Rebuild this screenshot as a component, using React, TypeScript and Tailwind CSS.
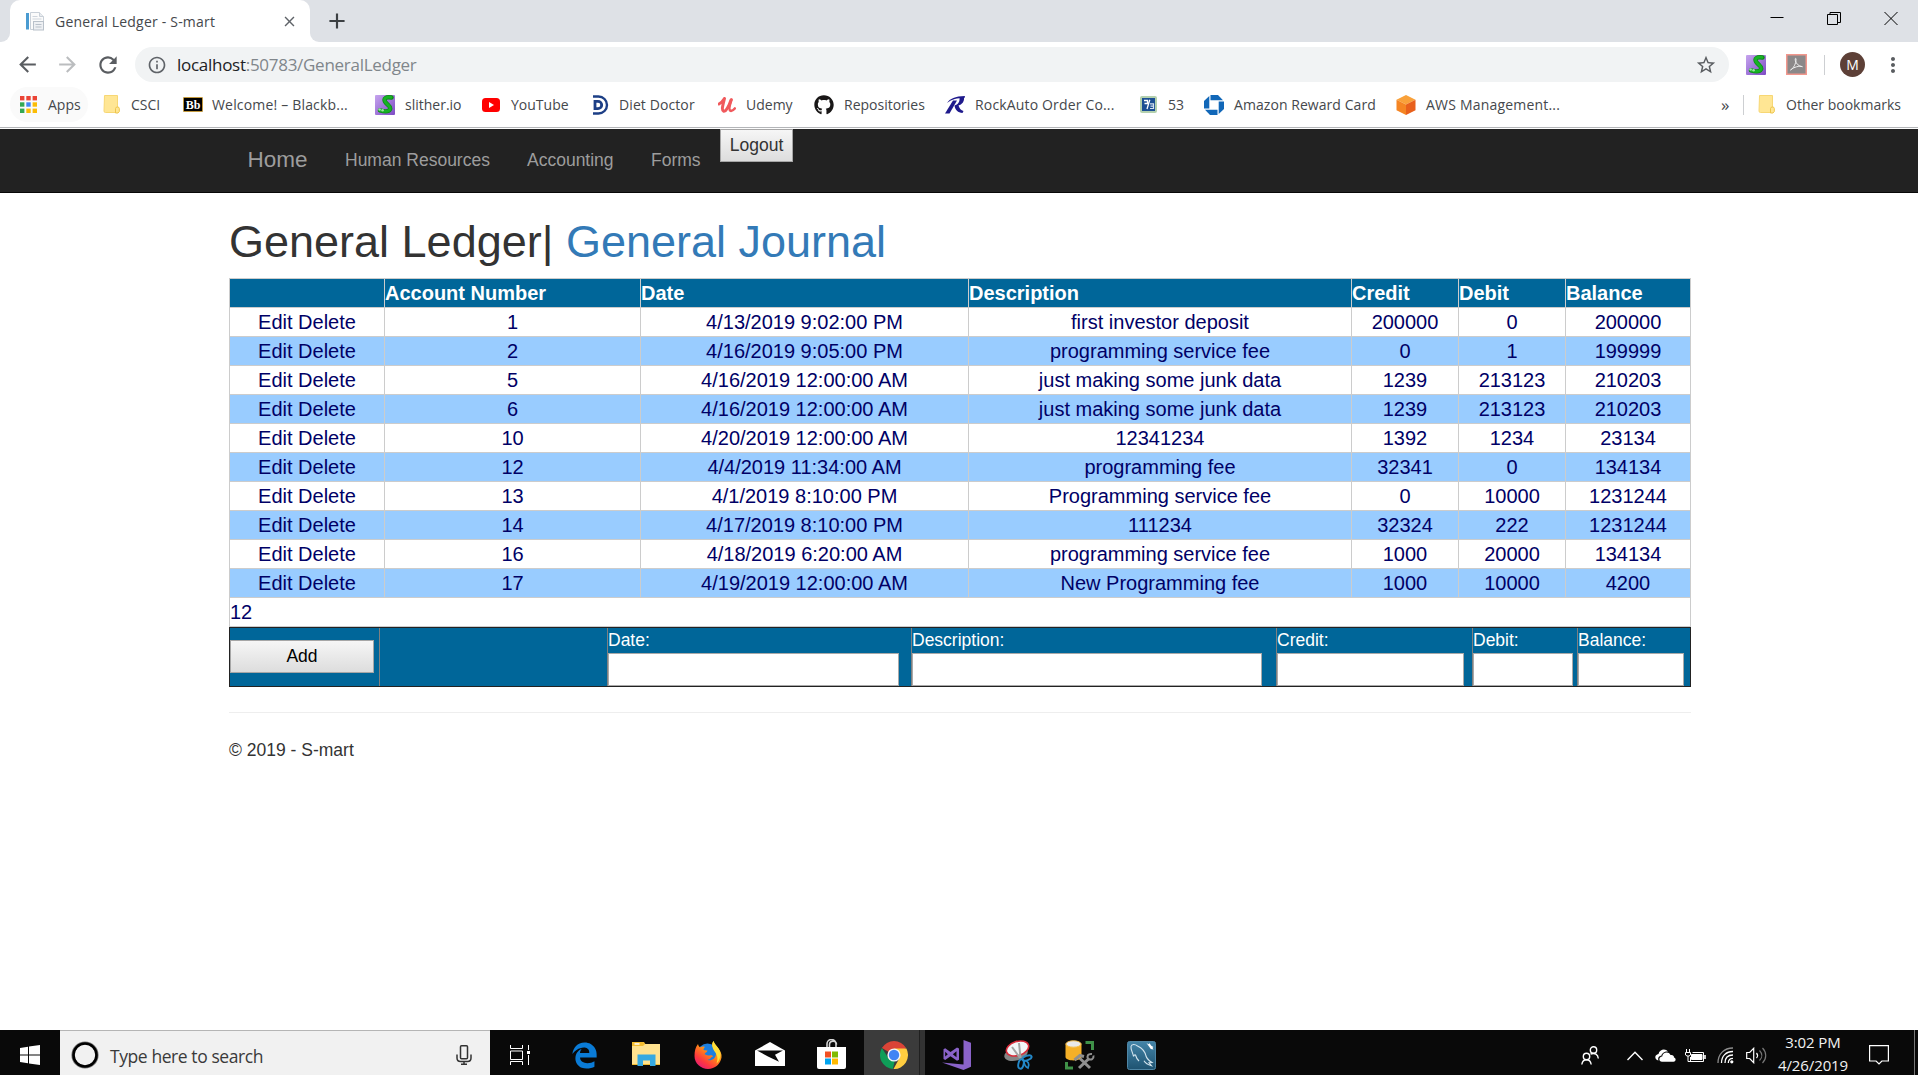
import React from "react";
import { FaEdgeLegacy, FaGithub } from "react-icons/fa6";
import { MdArrowBack, MdArrowForward, MdRefresh, MdInfoOutline, MdStarBorder, MdMoreVert, MdClose, MdAdd } from "react-icons/md";

/* ---------- Browser icons ---------- */

const PageIcon = () => (
  <svg viewBox="0 0 20 20" className="size-5">
    <path d="M5.500 1.500h9l4 4v13h-13z" fill="#fbfbfb" stroke="#c9d0d8" />
    <path d="M14.500 1.500v4h4" fill="#e9ecef" stroke="#c9d0d8" />
    <rect x="1" y="2" width="3" height="16.500" fill="#4a9bd1" />
    <path d="M7.500 5.500h5M7.500 8h9" stroke="#cfd5dc" />
    <rect x="8.500" y="10.500" width="10" height="8.500" fill="#eef0f3" stroke="#b9c1ca" />
    <path d="M10.500 13.500h6M10.500 16h6" stroke="#b9c1ca" />
  </svg>
);

const APP_DOTS = ["#ea4335", "#ea4335", "#ea4335", "#34a853", "#4285f4", "#fbbc05", "#34a853", "#fbbc05", "#fbbc05"];
const AppsIcon = () => (
  <svg viewBox="0 0 17 17" className="size-[17px]">
    {APP_DOTS.map((c, i) => (
      <rect key={i} x={(i % 3) * 6.3} y={Math.floor(i / 3) * 6.3} width="4.400" height="4.400" fill={c} />
    ))}
  </svg>
);

const FolderIcon = () => (
  <svg viewBox="0 0 17 19" className="h-[19px] w-[17px]">
    <path d="M1.500.5h13v17h-12a1.500 1.500 0 0 1-1.500-1.500z" fill="#ffe694" stroke="#f7d774" />
    <path d="M12.500 13.500l1-1.500h2l.8 1.500v3l-1.300 1.500h-2.500z" fill="#ffe694" stroke="#eec54c" />
  </svg>
);

const BlackboardIcon = () => (
  <div className="flex h-[15px] w-5 items-center justify-center rounded-[1px] border border-[#c49a3f] bg-black font-['Liberation_Serif',serif] text-[12px] font-bold leading-none text-white">
    Bb
  </div>
);

const SlitherIcon = () => (
  <svg viewBox="0 0 20 20" className="size-5">
    <defs>
      <linearGradient id="slither" x1="0" y1="0" x2="1" y2="1">
        <stop offset="0" stopColor="#c6a5ee" />
        <stop offset="1" stopColor="#7d4bc4" />
      </linearGradient>
    </defs>
    <rect width="20" height="20" rx="1" fill="url(#slither)" />
    <path d="M16.500 2.500C11 1.500 8.500 3.500 10 6.500s6.500 5 5 7.800-6 2.200-10 1" fill="none" stroke="#0d8a16" strokeWidth="4.400" strokeLinecap="round" />
    <path d="M16 2.300C11 1.500 8.500 3.500 10 6.500s6.500 5 5 7.800-6 2.200-10 1" fill="none" stroke="#17b324" strokeWidth="2.800" strokeLinecap="round" />
    <circle cx="4.600" cy="14.500" r="1.300" fill="#9be3a2" />
    <circle cx="7.600" cy="15.200" r="1.300" fill="#9be3a2" />
  </svg>
);

const YouTubeIcon = () => (
  <svg viewBox="0 0 18 14" className="h-[14px] w-[18px]">
    <rect width="18" height="14" rx="3.500" fill="#f00" />
    <path d="M7 4l5 3-5 3z" fill="#fff" />
  </svg>
);

const DietDoctorIcon = () => (
  <svg viewBox="0 0 17 20" className="h-5 w-[17px]" fill="none" stroke="#1d3f86">
    <path d="M1 1.500h5.500a8.500 8.500 0 0 1 0 17H1" strokeWidth="2.400" />
    <path d="M3 6.300h3a3.700 3.700 0 0 1 0 7.400H3z" strokeWidth="2.800" />
  </svg>
);

const UdemyIcon = () => (
  <svg viewBox="0 0 18 16" className="h-4 w-[18px]" fill="none" stroke="#f0595c" strokeLinecap="round" strokeLinejoin="round">
    <path d="M1 7c2-1 4-3 5.500-5.500C5.500 6 3 13 5.500 14S11 9 13 3" strokeWidth="3" />
    <path d="M13.500 2.500C12 7 10.500 13 12.500 13.800c1.500.4 3-.8 4.300-2.300" strokeWidth="2.600" />
  </svg>
);

const RockAutoIcon = () => (
  <svg viewBox="0 0 20 18" className="h-[18px] w-5" fill="#1f1a8c">
    <path d="M2 7C5 2.500 10 .3 20 0l-.5 2C12 2.200 7 3 2 7z" />
    <path d="M8 4.500h4L4.500 17.500H0z" />
    <path d="M14.500 1.500h4.500c.5 4-2 7-5.500 8 1 3 2.500 5 5 5.500l-1 2c-4.500-.3-7.500-3-8-7.500 3.500-1 5.500-3.500 5-8z" />
  </svg>
);

const FifthThirdIcon = () => (
  <svg viewBox="0 0 17 17" className="size-[17px]">
    <rect x="1" y="1" width="15" height="15" rx="1" fill="#1c4f93" stroke="#b3d0ae" strokeWidth="2" />
    <path d="M4 4.500h3.500v3H4.500M9.800 3.800L7 13" stroke="#fff" strokeWidth="1.300" fill="none" />
    <path d="M10 7.800h3.500v4.700H10M10.500 10.200h3" stroke="#d4e1f0" strokeWidth="1.200" fill="none" />
  </svg>
);

const ChaseIcon = () => (
  <svg viewBox="0 0 20 20" className="size-5" fill="#1167b8">
    <path d="M6.500 0h7.500l5 5.300H6.500z" />
    <path d="M20 6.500V14l-5.300 5V6.500z" />
    <path d="M13.500 20H6l-5-5.300h12.500z" />
    <path d="M0 13.500V6l5.300-5v12.500z" />
  </svg>
);

const AwsIcon = () => (
  <svg viewBox="0 0 20 20" className="size-5">
    <path d="M10 0l9.500 4.700L10 9.500.5 4.700z" fill="#f9a13a" />
    <path d="M.5 4.700L10 9.500V20L.5 15.300z" fill="#f58523" />
    <path d="M19.500 4.700L10 9.500V20l9.500-4.700z" fill="#e8601c" />
  </svg>
);

const AcrobatIcon = () => (
  <svg viewBox="0 0 21 21" className="size-[21px]">
    <rect x=".75" y=".75" width="19.500" height="19.500" fill="#8b8889" stroke="#f1978d" strokeWidth="1.500" />
    <path d="M4.500 16c2.500-1 5.800-6.500 5.500-11-.2-1.500-1.200-.5-.6 1.800.8 2.800 3.300 5.600 7 5.900-3-1.200-8.400.3-11.900 3.300z" fill="none" stroke="#eee" strokeWidth="1" />
  </svg>
);

/* ---------- Browser chrome ---------- */

const TabStrip = () => (
  <div className="flex h-[42px] shrink-0 items-start bg-[#dee1e6]">
    <div className="flex h-[42px] w-[10px] bg-white">
      <div className="h-[42px] w-full rounded-br-[9px] bg-[#dee1e6]" />
    </div>
    <div className="flex h-[42px] w-[300px] items-center rounded-t-[10px] bg-white pl-[15px]">
      <PageIcon />
      <span className="ml-[10px] w-[226px] text-[14px] tracking-[0.2px] text-[#45484c]">General Ledger - S-mart</span>
      <MdClose className="size-[17px] text-[#5f6368]" />
    </div>
    <div className="flex h-[42px] w-[10px] bg-white">
      <div className="h-[42px] w-full rounded-bl-[9px] bg-[#dee1e6]" />
    </div>
    <MdAdd className="ml-[4px] mt-[8px] size-[26px] text-[#3c4043]" />
    <div className="ml-auto mr-5 flex gap-[43px] pt-[11px]">
      <svg viewBox="0 0 14 14" className="size-[14px]" stroke="#000"><path d="M.5 6.500h13" /></svg>
      <svg viewBox="0 0 14 14" className="size-[14px]" stroke="#000" fill="none"><path d="M.5 3.500h10v10H.5zM3 3.500V1.500h10.500v10h-3" /></svg>
      <svg viewBox="0 0 14 14" className="size-[14px]" stroke="#000"><path d="M.5 1l13 13M13.500 1l-13 13" /></svg>
    </div>
  </div>
);

const Toolbar = () => (
  <div className="flex h-[45px] shrink-0 items-center bg-white pl-[15px]">
    <MdArrowBack className="size-[25px] text-[#5a5d61]" />
    <MdArrowForward className="ml-[15px] size-[25px] text-[#bbbdbf]" />
    <MdRefresh className="ml-[15px] size-[26px] text-[#5a5d61]" />
    <div className="ml-[14px] flex h-[35px] w-[1594px] items-center rounded-full bg-[#f1f3f4] pl-[12px] pr-[12px]">
      <MdInfoOutline className="size-5 text-[#5f6368]" />
      <span className="ml-[10px] text-[17px] tracking-[-0.28px] text-[#80868b]">
        <span className="text-[#202124]">localhost</span>:50783/GeneralLedger
      </span>
      <MdStarBorder className="ml-auto size-[22px] text-[#5a5d61]" />
    </div>
    <div className="ml-[17px]"><SlitherIcon /></div>
    <div className="ml-[20px]"><AcrobatIcon /></div>
    <div className="ml-[17px] h-5 w-px bg-[#cdcfd2]" />
    <div className="ml-[15px] flex size-[25px] items-center justify-center rounded-full bg-[#5d4037] text-[14px] text-white">M</div>
    <MdMoreVert className="ml-[16px] size-[24px] text-[#5a5d61]" />
  </div>
);

type Bookmark = { label: string; icon: React.ReactNode; box: string; slot: string; text?: string };

const BOOKMARKS: Bookmark[] = [
  { label: "Apps", icon: <AppsIcon />, box: "w-[83px]", slot: "w-[28px]" },
  { label: "CSCI", icon: <FolderIcon />, box: "w-[80px]", slot: "w-[28px]" },
  { label: "Welcome! – Blackb...", icon: <BlackboardIcon />, box: "w-[192px]", slot: "w-[29px]", text: "tracking-[0.18px]" },
  { label: "slither.io", icon: <SlitherIcon />, box: "w-[107px]", slot: "w-[30px]" },
  { label: "YouTube", icon: <YouTubeIcon />, box: "w-[110px]", slot: "w-[29px]" },
  { label: "Diet Doctor", icon: <DietDoctorIcon />, box: "w-[126px]", slot: "w-[27px]", text: "tracking-[0.1px]" },
  { label: "Udemy", icon: <UdemyIcon />, box: "w-[96px]", slot: "w-[28px]" },
  { label: "Repositories", icon: <FaGithub className="size-5 text-[#191717]" />, box: "w-[131px]", slot: "w-[30px]" },
  { label: "RockAuto Order Co...", icon: <RockAutoIcon />, box: "w-[195px]", slot: "w-[30px]", text: "tracking-[0.16px]" },
  { label: "53", icon: <FifthThirdIcon />, box: "w-[64px]", slot: "w-[28px]" },
  { label: "Amazon Reward Card", icon: <ChaseIcon />, box: "w-[192px]", slot: "w-[30px]", text: "tracking-[0.06px]" },
  { label: "AWS Management...", icon: <AwsIcon />, box: "w-[325px]", slot: "w-[30px]", text: "tracking-[0.2px]" },
];

const BookmarksBar = () => (
  <div className="flex h-[42px] shrink-0 flex-col border-b border-[#fdfdfd] bg-white">
    <div className="flex h-[35px] items-center whitespace-nowrap pl-[10px] text-[14px] text-[#45484c]">
      <div className="-mr-[78px] h-[35px] w-[78px] rounded-full bg-[#fafafa]" />
      <div className="relative flex items-center pl-[10px]">
        {BOOKMARKS.map((b) => (
          <div key={b.label} className={`flex items-center ${b.box}`}>
            <span className={`shrink-0 ${b.slot}`}>{b.icon}</span>
            <span className={b.text}>{b.label}</span>
          </div>
        ))}
        <span className="w-[22px] text-[17px] leading-none">»</span>
        <div className="h-5 w-px bg-[#cdcfd2]" />
        <div className="ml-[14px] flex items-center">
          <span className="w-[28px]"><FolderIcon /></span>
          <span>Other bookmarks</span>
        </div>
      </div>
    </div>
    <div className="mt-[5px] h-px bg-[#b3b5b8]" />
  </div>
);

/* ---------- Web page ---------- */

const Navbar = () => (
  <nav className="flex h-[64px] shrink-0 border-b border-[#080808] bg-[#222] text-[17.5px] text-[#9d9d9d]">
    <a className="ml-[247.500px] w-[97.500px] text-[22.5px] leading-[62px]">Home</a>
    <a className="w-[182px] leading-[62px]">Human Resources</a>
    <a className="w-[124px] leading-[62px]">Accounting</a>
    <a className="w-[69px] leading-[62px]">Forms</a>
    <button className="h-[33px] w-[73px] border border-[#a6a6a6] bg-linear-to-b from-[#f6f6f6] to-[#dddddd] text-[#333]">Logout</button>
  </nav>
);

const COLUMNS = [
  { title: "", width: "w-[155px]" },
  { title: "Account Number", width: "w-[256px]" },
  { title: "Date", width: "w-[328px]" },
  { title: "Description", width: "w-[383px]" },
  { title: "Credit", width: "w-[107px]" },
  { title: "Debit", width: "w-[107px]" },
  { title: "Balance", width: "w-[126px]" },
];

const ROWS = [
  ["1", "4/13/2019 9:02:00 PM", "first investor deposit", "200000", "0", "200000"],
  ["2", "4/16/2019 9:05:00 PM", "programming service fee", "0", "1", "199999"],
  ["5", "4/16/2019 12:00:00 AM", "just making some junk data", "1239", "213123", "210203"],
  ["6", "4/16/2019 12:00:00 AM", "just making some junk data", "1239", "213123", "210203"],
  ["10", "4/20/2019 12:00:00 AM", "12341234", "1392", "1234", "23134"],
  ["12", "4/4/2019 11:34:00 AM", "programming fee", "32341", "0", "134134"],
  ["13", "4/1/2019 8:10:00 PM", "Programming service fee", "0", "10000", "1231244"],
  ["14", "4/17/2019 8:10:00 PM", "111234", "32324", "222", "1231244"],
  ["16", "4/18/2019 6:20:00 AM", "programming service fee", "1000", "20000", "134134"],
  ["17", "4/19/2019 12:00:00 AM", "New Programming fee", "1000", "10000", "4200"],
];

const CELL = "h-[29px] border-l border-t border-[#ccc] p-0 leading-[28px] last:border-r";

const LedgerTable = () => (
  <table className="w-[1462px] table-fixed border-separate border-spacing-0 text-[20px] text-[#000066]">
    <thead>
      <tr className="bg-[#006699] text-left text-white">
        {COLUMNS.map((c) => (
          <th key={c.title} className={`${CELL} ${c.width} font-bold`}>{c.title}</th>
        ))}
      </tr>
    </thead>
    <tbody>
      {ROWS.map((row) => (
        <tr key={row[0]} className="text-center even:bg-[#99ccff]">
          <td className={CELL}>Edit Delete</td>
          {row.map((value, i) => (
            <td key={i} className={CELL}>{value}</td>
          ))}
        </tr>
      ))}
      <tr>
        <td colSpan={7} className="h-[30px] border border-[#ccc] p-0 leading-[28px]">12</td>
      </tr>
    </tbody>
  </table>
);

const FIELDS = [
  { label: "Date:", cell: "w-[304px]", input: "w-[291px]" },
  { label: "Description:", cell: "w-[365px]", input: "w-[350px]" },
  { label: "Credit:", cell: "w-[196px]", input: "w-[187px]" },
  { label: "Debit:", cell: "w-[105px]", input: "w-[100px]" },
  { label: "Balance:", cell: "w-[113px]", input: "w-[106px]" },
];

const EntryForm = () => (
  <div className="flex h-[60px] w-[1462px] border border-[#222] bg-[#006699] text-[17.5px] text-white">
    <div className="w-[149px] pt-[12px]">
      <button className="block h-[33px] w-[144px] border border-[#a6a6a6] bg-linear-to-b from-[#f6f6f6] to-[#dddddd] text-black">Add</button>
    </div>
    <div className="w-[228px] border-l border-[#808080]" />
    {FIELDS.map((f) => (
      <label key={f.label} className={`border-l border-[#808080] ${f.cell}`}>
        <span className="block h-[25px] leading-[25px]">{f.label}</span>
        <input className={`block h-[33px] border border-[#a9a9a9] bg-white ${f.input}`} />
      </label>
    ))}
  </div>
);

const Page = () => (
  <div className="flex min-h-0 flex-1 flex-col bg-white font-['Liberation_Sans',Arial,sans-serif]">
    <Navbar />
    <main className="ml-[229px] w-[1462px] pt-[24px] text-[#333]">
      <h1 className="h-[61px] text-[45px] leading-[49px]">
        General Ledger| <a className="text-[#337ab7]">General Journal</a>
      </h1>
      <LedgerTable />
      <EntryForm />
      <hr className="mt-[25px] border-t border-[#eee]" />
      <p className="mt-[25px] text-[17.5px] leading-[25px]">© 2019 - S-mart</p>
    </main>
  </div>
);

/* ---------- Taskbar ---------- */

const ExplorerIcon = () => (
  <svg viewBox="0 0 28 24" className="h-6 w-7">
    <path d="M0 0h12l2 3h14v20H0z" fill="#f5bd2f" />
    <path d="M2.500 1.200h5v1.500h-5z" fill="#fff" />
    <path d="M0 4h11l2-2h15v20H0z" fill="#ffe28f" />
    <path d="M5.500 24V12.500h18V24h-5.500v-5.500H11V24z" fill="#36a9e1" />
  </svg>
);

const FirefoxIcon = () => (
  <svg viewBox="0 0 28 28" className="size-7">
    <defs>
      <linearGradient id="fox" x1=".9" y1="0" x2=".2" y2="1">
        <stop offset="0" stopColor="#ffe640" />
        <stop offset=".45" stopColor="#ff8a16" />
        <stop offset=".75" stopColor="#ff3a3d" />
        <stop offset="1" stopColor="#e5177b" />
      </linearGradient>
    </defs>
    <circle cx="13.500" cy="12.500" r="10" fill="#1b7fe0" />
    <path d="M4 3c.3 1.500 1 2.500 2 3.300C7.500 5.500 9.500 5.400 11 6c-1 .7-1.500 1.800-1.500 2.800 1 .7 2.500.5 4 .8-.2 1.800-2.500 2-3 3.600 1.500.3 2.500 1.600 5 1.200 1.500-.2 3-.2 3.500 1-2 .3-2.500 3-5.500 3.300 3 1.500 8-.2 8.500-5.700.2-3-2-4.500-3-6.500C17.500 4 18 2 19.500 0c.8 3 3 4.500 5 7.500 2 2.800 3.500 5.500 3 9C26.500 23 21 28 14 28S.5 22.500.5 15c0-5 1-9 3.500-12z" fill="url(#fox)" />
    <path d="M19.500 0c.8 3 3 4.500 5 7.500 3 4.500 2.500 11-2 15 2-5 .5-9-1.500-11.500C18 7 17.500 3 19.500 0z" fill="#ffdf3a" />
  </svg>
);

const MailIcon = () => (
  <svg viewBox="0 0 30 24" className="h-6 w-[30px]">
    <path d="M0 8.500L15 0l15 8.500V24H0z" fill="#fff" />
    <path d="M2 8.500h26l-8 4.200 4 7L13 14.500z" fill="#0a0a0a" />
  </svg>
);

const StoreIcon = () => (
  <svg viewBox="0 0 29 30" className="h-[30px] w-[29px]">
    <path d="M10 10V5a4.500 4.500 0 0 1 9 0v5M12.500 9V5.500c0-4 7-5 7 0" fill="none" stroke="#d5d5d5" strokeWidth="1.600" />
    <path d="M0 8h29v20a2 2 0 0 1-2 2H2a2 2 0 0 1-2-2z" fill="#fff" />
    <path d="M8 12.500h6v6H8z" fill="#f25022" />
    <path d="M15 12.500h6v6h-6z" fill="#7fba00" />
    <path d="M8 19.500h6v6H8z" fill="#00a4ef" />
    <path d="M15 19.500h6v6h-6z" fill="#ffb900" />
  </svg>
);

const ChromeIcon = () => (
  <svg viewBox="0 0 28 28" className="size-7">
    <path d="M14 14L1.880 7A14 14 0 0 1 26.120 7z" fill="#db4437" />
    <path d="M14 7.500h12.400A14 14 0 0 1 13.500 28l6-11z" fill="#ffcd40" />
    <path d="M1.880 7L8.500 17.300l6.200 3L12.800 28A14 14 0 0 1 1.880 7z" fill="#0f9d58" />
    <circle cx="14" cy="14" r="6.600" fill="#f5f5f5" />
    <circle cx="14" cy="14" r="5.200" fill="#4285f4" />
  </svg>
);

const VisualStudioIcon = () => (
  <svg viewBox="0 0 30 30" className="size-[30px]" fill="#8a63c9">
    <path d="M21.500 0L29 2.700v24L21.500 30 0 22.500l21.500 2z" />
    <path fillRule="evenodd" d="M1.500 9.200l1.700-.9L8.500 12 15 7.500l2 1v11.300l-2 1L8.500 16.300 3.200 20l-1.700-.9zm1.700 2.600v4.700l2.600-2.300zm11.300-.6l-3.700 3 3.700 3z" />
  </svg>
);

const SnippingIcon = () => (
  <svg viewBox="0 0 29 30" className="h-[30px] w-[29px]" fill="none">
    <ellipse cx="12" cy="14" rx="12" ry="6.500" transform="rotate(-15 12 14)" fill="#858585" />
    <ellipse cx="13.500" cy="8.500" rx="11.500" ry="7" transform="rotate(-18 13.500 8.500)" fill="#f2f5f7" stroke="#d92b3a" strokeWidth="1.600" />
    <path d="M8 7l8 11M15 3l1.500 15" stroke="#a3a3a3" strokeWidth="2" />
    <ellipse cx="23" cy="18" rx="4.800" ry="2.200" transform="rotate(-20 23 18)" stroke="#2388c8" strokeWidth="1.900" />
    <ellipse cx="17" cy="24" rx="2.600" ry="4.800" transform="rotate(12 17 24)" stroke="#2388c8" strokeWidth="1.900" />
    <path d="M20 20.500c4 0 6 3.500 4 7.500-2-1-4-4-4-7.500z" stroke="#2388c8" strokeWidth="1.700" />
  </svg>
);

const SqlServerIcon = () => (
  <svg viewBox="0 0 30 30" className="size-[30px]">
    <path d="M.5 3.500h16V17c0 4.500-16 4.500-16 0z" fill="#f5b027" />
    <ellipse cx="8.500" cy="4" rx="7.500" ry="3.200" fill="#e9e9e9" stroke="#f5c04f" />
    <path d="M20.500 2.500h7V10M1.500 22v6H8" fill="none" stroke="#3f9148" strokeWidth="3" />
    <path d="M14 28l10-9.500M25 28L15 18.500M9.500 20l5.500-4.500 4 1" fill="none" stroke="#8f8f8f" strokeWidth="3" />
    <path d="M27 14c-4-.5-5.500 2-3.800 5 3 1.500 5.800-.2 5.300-3.500" fill="none" stroke="#8f8f8f" strokeWidth="2" />
  </svg>
);

const MySqlIcon = () => (
  <svg viewBox="0 0 29 29" className="size-[29px]">
    <defs>
      <linearGradient id="workbench" x1="0" y1="0" x2="0" y2="1">
        <stop offset="0" stopColor="#4384a8" />
        <stop offset="1" stopColor="#1f5371" />
      </linearGradient>
    </defs>
    <rect x=".5" y=".5" width="28" height="28" rx="2" fill="url(#workbench)" stroke="#4f86a5" />
    <path d="M6.500 15.500C6 12 3.500 8.500 4 5.500 4.500 3 8 3 10.500 5c4.500 2 7.500 5.500 8.500 10 .7 2.500 2 4 6 6.500l-3 .3 2.500 3c-3.500-1-6-2.500-7.500-5M6.500 15.500c.5-1.300 1-2 2-1.500.5 2 1.500 4 3.500 6" fill="none" stroke="#d3e4ee" strokeWidth="1.100" />
    <path d="M19.500 2l2 1.200 1-.9 1.800 2.400 2.200 1.300-1 .8 1 1.700-2.700-.5-1.800-2.500z" fill="#fff" />
  </svg>
);

const Tray = () => (
  <div className="flex h-full items-center">
    <svg viewBox="0 0 18 20" className="h-5 w-[18px]" fill="none" stroke="#fff" strokeWidth="1.400">
      <circle cx="12.500" cy="4" r="3.200" />
      <circle cx="5.500" cy="10.500" r="3.200" />
      <path d="M.8 18.500c.5-3 2-4.700 4.700-4.700s4.200 1.700 4.700 4.700M9.500 8c4.500-1.500 7.500.5 7.800 4.500" />
    </svg>
    <svg viewBox="0 0 16 10" className="ml-[28px] h-[10px] w-4" fill="none" stroke="#fff" strokeWidth="1.400"><path d="M.5 9L8 1.200 15.500 9" /></svg>
    <svg viewBox="0 0 21 13" className="ml-[12px] h-[13px] w-[21px]" fill="#fff">
      <path d="M3.500 11.500C-1 10.500-.5 5.500 3.500 5 4.500 0 10.500-1 13 2.500 9 2 6.500 5 6.500 6.500 3.500 7 2.500 9.500 3.500 11.500z" />
      <path d="M7 12.700c-3.500 0-3.500-5 .2-5.200C7.500 3 14 2 15.500 6c2.500-.5 3.700 1 3.400 2.500 2.500.6 2.200 4.200-.4 4.200z" />
    </svg>
    <svg viewBox="0 0 21 14" className="ml-[9px] h-[14px] w-[21px]" fill="none" stroke="#fff">
      <path d="M1.500 0v3M4.500 0v3M.5 3.500h5v2.500l-1.500 1h-2L.5 6zM3 7v5.500h3" />
      <path d="M7.500 3.500h11v9h-13V8" />
      <path d="M6.500 5.500h10.500v5h-10.500z" fill="#fff" />
      <path d="M20 6v4" strokeWidth="1.600" />
    </svg>
    <svg viewBox="0 0 17 17" className="ml-[11px] size-[17px]" fill="none" stroke="#fff" strokeWidth="1.300">
      <path d="M1 16C1 7 7 1 16 1" stroke="#8d8d8d" />
      <path d="M4.500 16C4.500 9 9 4.500 16 4.500M8 16c0-5 3-8 8-8M11.300 16c0-3 1.700-4.700 4.700-4.700" />
      <circle cx="14.800" cy="14.800" r="1.600" fill="#fff" stroke="none" />
    </svg>
    <svg viewBox="0 0 21 17" className="ml-[12px] h-[17px] w-[21px]" fill="none" stroke="#fff" strokeWidth="1.200">
      <path d="M.7 5.500h3l4-4.200v14.400l-4-4.200h-3z" />
      <path d="M10.500 6c1.300 1.500 1.300 3.500 0 5" />
      <path d="M13.500 3.500c3 3 3 7 0 10M16.500 1c4.300 4.500 4.300 10.500 0 15" stroke="#777" />
    </svg>
  </div>
);

const Taskbar = () => (
  <footer className="flex h-[45px] shrink-0 items-start overflow-hidden bg-[#090909]">
    <div className="w-[60px] pl-5 pt-[15px]">
      <svg viewBox="0 0 20 20" className="size-5" fill="#fff">
        <path d="M0 3l8-1.200v7.700H0zM9 1.600L20 0v9.500H9zM0 10.500h8v7.700L0 17zM9 10.500h11V20L9 18.400z" />
      </svg>
    </div>
    <div className="flex h-[45px] w-[430px] items-center border-t border-[#b5b5b5] bg-[#f1f1f1] pl-[11px] pr-[18px]">
      <svg viewBox="0 0 28 28" className="mt-[3px] size-7 shrink-0">
        <circle cx="14" cy="14" r="12" fill="none" stroke="#777" strokeWidth="3.200" />
        <circle cx="14" cy="14" r="11.500" fill="none" stroke="#000" strokeWidth="2.600" />
      </svg>
      <span className="ml-[11px] mt-[6px] text-[17.5px] tracking-[-0.42px] text-[#3a3a3a]">Type here to search</span>
      <svg viewBox="0 0 16 20" className="ml-auto mt-[4px] h-5 w-4" fill="none" stroke="#333" strokeWidth="1.500">
        <rect x="4.500" y=".8" width="7" height="13" rx="1" />
        <path d="M1 9.500v3.500c0 2 1.500 3.500 3.500 3.500h7c2 0 3.500-1.500 3.500-3.500V9.500M8 16.500v3M5 19.300h6" />
      </svg>
    </div>
    <div className="w-[81px] pl-5 pt-[15px]">
      <svg viewBox="0 0 20 20" className="size-5" fill="none" stroke="#fff">
        <path d="M.5 0v3.500h12V0M.5 6h12v8.500H.5zM.5 20v-3.500h12V20M18.500 0v5M18.500 10v10" />
        <path d="M17 6h3v3h-3z" fill="#fff" stroke="none" />
      </svg>
    </div>
    <FaEdgeLegacy className="mt-[12px] size-[27px] text-[#0a7bd6]" />
    <div className="ml-[34px] mt-[12px]"><ExplorerIcon /></div>
    <div className="ml-[34px] mt-[11px]"><FirefoxIcon /></div>
    <div className="ml-[33px] mt-[12px]"><MailIcon /></div>
    <div className="ml-[32px] mt-[9px]"><StoreIcon /></div>
    <div className="ml-[18px] flex h-[45px] w-[56px] border-r border-[#202020] bg-[#3b3b3b] pl-[16px] pt-[11px]"><ChromeIcon /></div>
    <div className="h-[45px] w-[5px] bg-[#333]" />
    <div className="ml-[17px] mt-[10px]"><VisualStudioIcon /></div>
    <div className="ml-[32px] mt-[10px]"><SnippingIcon /></div>
    <div className="ml-[32px] mt-[10px]"><SqlServerIcon /></div>
    <div className="ml-[32px] mt-[11px]"><MySqlIcon /></div>
    <div className="ml-auto mt-[3px] h-[45px]"><Tray /></div>
    <div className="ml-[8px] mt-[1px] w-[76px] text-center text-[15px] tracking-[-0.1px] leading-[23px] text-[#f2f2f2]">
      <div>3:02 PM</div>
      <div>4/26/2019</div>
    </div>
    <svg viewBox="0 0 20 21" className="ml-[18px] mt-[15px] h-[21px] w-5" fill="none" stroke="#fff" strokeWidth="1.200">
      <path d="M.6.600h18.800v15.400h-6.500L10 19l-2.900-3H.6z" />
    </svg>
    <div className="ml-[25px] mr-[3px] h-[45px] w-px bg-[#777]" />
  </footer>
);

export default function App() {
  return (
    <div className="flex h-[1075px] w-[1918px] flex-col overflow-hidden bg-white font-['Open_Sans',sans-serif]">
      <TabStrip />
      <Toolbar />
      <BookmarksBar />
      <Page />
      <Taskbar />
    </div>
  );
}
